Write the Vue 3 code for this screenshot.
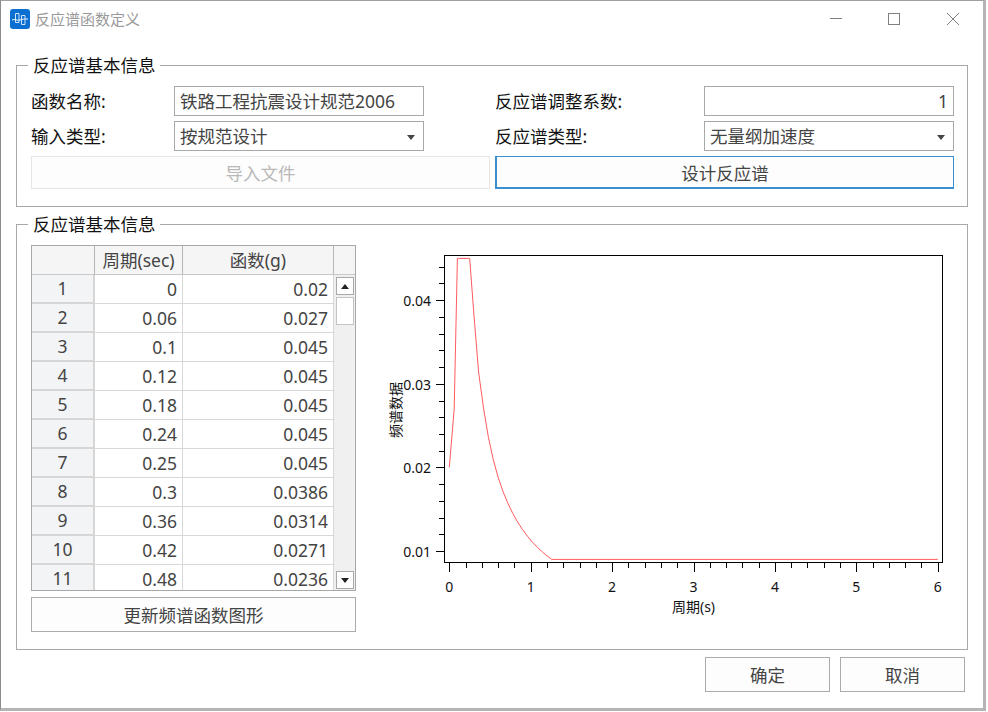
<template>
  <div class="desktop">
    <div class="window">
      <div class="titlebar">
        <svg class="app-icon" width="20" height="20" viewBox="0 0 20 20">
          <rect width="20" height="20" rx="3" fill="#0a6fd0" />
          <path d="M5.5 4.5h3.5v9h-3.5zM11.5 6.5h3.5v9h-3.5z" fill="none" stroke="#cfe3f7" />
          <path d="M2 11c3-1.5 5 1 8 0s4-1 8-1" fill="none" stroke="#eef5fc" />
        </svg>
        <span class="title">反应谱函数定义</span>
        <div class="win-buttons">
          <svg width="12" height="12" viewBox="0 0 12 12"><path d="M0 5.5h12" stroke="#808080" /></svg>
          <svg width="12" height="12" viewBox="0 0 12 12"><rect x=".5" y=".5" width="11" height="11" fill="none" stroke="#808080" /></svg>
          <svg class="close-icon" width="12" height="12" viewBox="0 0 12 12"><path d="M0 0l12 12M12 0L0 12" stroke="#808080" /></svg>
        </div>
      </div>

      <section class="group top-group">
        <span class="legend">反应谱基本信息</span>
        <div class="form-grid">
          <label>函数名称:</label>
          <div class="field">铁路工程抗震设计规范2006</div>
          <label class="right-label">反应谱调整系数:</label>
          <div class="field num">1</div>
          <label>输入类型:</label>
          <div class="field select">按规范设计<i class="caret"></i></div>
          <label class="right-label">反应谱类型:</label>
          <div class="field select">无量纲加速度<i class="caret"></i></div>
        </div>
        <div class="action-row">
          <button class="btn disabled">导入文件</button>
          <button class="btn focused">设计反应谱</button>
        </div>
      </section>

      <section class="group bottom-group">
        <span class="legend">反应谱基本信息</span>
        <div class="left-col">
          <div class="table-wrap">
            <div class="grid">
              <div class="head corner"></div>
              <div class="head">周期(sec)</div>
              <div class="head">函数(g)</div>
              <template v-for="(row, i) in rows" :key="i">
                <div class="row-head">{{ i + 1 }}</div>
                <div class="cell">{{ row[0] }}</div>
                <div class="cell">{{ row[1] }}</div>
              </template>
            </div>
            <div class="scroll-col">
              <div class="head corner"></div>
              <div class="track">
                <span class="sb-btn"><i class="tri up"></i></span>
                <span class="thumb"></span>
                <span class="sb-btn end"><i class="tri down"></i></span>
              </div>
            </div>
          </div>
          <button class="btn update">更新频谱函数图形</button>
        </div>

        <svg class="chart" width="570" height="400" viewBox="0 0 570 400">
          <rect x="58.5" y="21.5" width="498" height="307" fill="#fff" stroke="#000" />
          <path :d="minorTicks" stroke="#000" fill="none" />
          <path :d="majorTicks" stroke="#000" fill="none" />
          <polyline :points="curve" fill="none" stroke="#ff5a5f" />
          <text v-for="t in yLabels" :key="t.label" x="45" :y="t.y + 6" text-anchor="end" class="tick-text">{{ t.label }}</text>
          <text v-for="t in xLabels" :key="t.label" :x="t.x" y="358" text-anchor="middle" class="tick-text">{{ t.label }}</text>
          <text x="307.5" y="378" text-anchor="middle" class="axis-text">周期(s)</text>
          <text x="0" y="0" transform="translate(15 176) rotate(-90)" text-anchor="middle" class="axis-text">频谱数据</text>
        </svg>
      </section>

      <div class="footer">
        <button class="btn footer-btn">确定</button>
        <button class="btn footer-btn">取消</button>
      </div>
    </div>
  </div>
</template>

<script setup>
import { computed } from "vue";

const rows = [
  ["0", "0.02"],
  ["0.06", "0.027"],
  ["0.1", "0.045"],
  ["0.12", "0.045"],
  ["0.18", "0.045"],
  ["0.24", "0.045"],
  ["0.25", "0.045"],
  ["0.3", "0.0386"],
  ["0.36", "0.0314"],
  ["0.42", "0.0271"],
  ["0.48", "0.0236"],
];

// chart coordinates are relative to the svg, whose origin sits at 386,234
const sx = (t) => 63.3 + t * 81.4;
const sy = (v) => 317 - (v - 0.01) * 8360;

const curve = computed(() => {
  const pts = rows.map((r) => [Number(r[0]), Number(r[1])]);
  for (let t = 0.54; t < 1.25; t += 0.06) pts.push([t, 0.0113 / t]);
  pts.push([1.26, 0.009], [6, 0.009]);
  return pts.map(([t, v]) => `${sx(t).toFixed(1)},${sy(v).toFixed(1)}`).join(" ");
});

const majorTicks = computed(() => {
  let d = "";
  for (let i = 0; i <= 6; i++) {
    const x = Math.round(sx(i)) + 0.5;
    d += `M${x} 329v9`;
  }
  for (let i = 1; i <= 4; i++) {
    const y = Math.round(sy(i / 100)) + 0.5;
    d += `M58 ${y}h-8`;
  }
  return d;
});

const minorTicks = computed(() => {
  let d = "";
  for (let i = 0; i < 30; i++) {
    if (i % 5 === 0) continue;
    const x = Math.round(sx(i / 5)) + 0.5;
    d += `M${x} 329v5`;
  }
  for (let i = 10; i <= 44; i += 2) {
    if (i % 10 === 0) continue;
    const y = Math.round(sy(i / 1000)) + 0.5;
    d += `M58 ${y}h-5`;
  }
  return d;
});

const yLabels = [0.01, 0.02, 0.03, 0.04].map((v) => ({
  label: v.toFixed(2),
  y: sy(v),
}));
const xLabels = [0, 1, 2, 3, 4, 5, 6].map((v) => ({ label: v, x: sx(v) }));
</script>

<style>
html,
body {
  margin: 0;
  background: #fff;
}
</style>

<style scoped>
.desktop {
  width: 988px;
  height: 712px;
  background: #fff;
  overflow: hidden;
  font-family: "Noto Sans", "Noto Sans CJK SC", sans-serif;
  font-size: 17.5px;
  color: #222;
}

.window {
  width: 986px;
  height: 711px;
  box-sizing: border-box;
  background: #fff;
  border-top: 1px solid #a0a0a0;
  border-left: 1px solid #8c8c8c;
  border-right: 3px solid #b5b5b5;
  border-bottom: 3px solid #b5b5b5;
  padding: 0 15px;
}

.titlebar {
  height: 64px;
  margin: 0 -15px;
  padding: 8px 24px 0 9px;
  box-sizing: border-box;
  display: flex;
  align-items: flex-start;
}

.app-icon {
  flex: none;
}

.title {
  margin-left: 5px;
  font-size: 15px;
  line-height: 21px;
  color: #9a9a9a;
}

.win-buttons {
  margin-left: auto;
  margin-top: 4px;
  display: flex;
  gap: 46px;
}

.close-icon {
  margin-left: 1px;
}

.group {
  position: relative;
  border: 1px solid #a8a8a8;
  box-sizing: border-box;
  width: 952px;
}

.legend {
  position: absolute;
  left: 11px;
  top: -12px;
  padding: 0 4px 0 5px;
  background: #fff;
  line-height: 22px;
  color: #111;
}

.top-group {
  height: 142px;
  padding: 20px 14px 0;
}

.form-grid {
  display: grid;
  grid-template-columns: 143px 250px 280px 250px;
  grid-auto-rows: 30px;
  row-gap: 5px;
  align-items: center;
}

.form-grid label {
  line-height: 30px;
  color: #111;
}

.right-label {
  padding-left: 71px;
  white-space: nowrap;
}

.field {
  position: relative;
  height: 30px;
  box-sizing: border-box;
  border: 1px solid #a8a8a8;
  padding: 0 5px;
  line-height: 28px;
  color: #444;
  white-space: nowrap;
}

.num {
  text-align: right;
}

.caret {
  position: absolute;
  right: 8px;
  top: 13px;
  border-left: 4px solid transparent;
  border-right: 4px solid transparent;
  border-top: 5px solid #444;
}

.action-row {
  display: grid;
  grid-template-columns: 459px 459px;
  column-gap: 5px;
  margin-top: 5px;
}

.btn {
  display: block;
  height: 33px;
  box-sizing: border-box;
  border: 1px solid #ababab;
  background: #fdfdfd;
  font: inherit;
  color: #444;
  padding: 0;
}

.disabled {
  border: 1px solid #e6e6e6;
  color: #b9b9b9;
}

.focused {
  border-style: solid;
  border-width: 1px 1px 2px 2px;
  border-color: #3a8fd0;
}

.bottom-group {
  margin-top: 17px;
  height: 426px;
  padding: 20px 14px 0;
  display: flex;
  align-items: flex-start;
}

.left-col {
  width: 325px;
  flex: none;
}

.table-wrap {
  display: flex;
  height: 346px;
  box-sizing: border-box;
  border: 1px solid #a8a8a8;
  overflow: hidden;
}

.grid {
  width: 302px;
  display: grid;
  grid-template-columns: 63px 88px 151px;
  grid-auto-rows: 29px;
  align-content: start;
}

.head {
  height: 29px;
  box-sizing: border-box;
  background: #f5f5f5;
  border-right: 1px solid #b5b5b5;
  border-bottom: 1px solid #c8c8c8;
  text-align: center;
  line-height: 28px;
  color: #444;
}

.row-head {
  box-sizing: border-box;
  background: #f3f4f6;
  border-right: 2px solid #d6d6d6;
  border-bottom: 2px solid #d6d6d6;
  text-align: center;
  line-height: 26px;
  color: #444;
}

.cell {
  box-sizing: border-box;
  border-right: 1px solid #d8d8d8;
  border-bottom: 1px solid #d8d8d8;
  padding: 0 5px;
  text-align: right;
  line-height: 28px;
  color: #444;
}

.scroll-col {
  width: 21px;
  flex: none;
}

.scroll-col .head {
  border-right: 0;
}

.track {
  height: 315px;
  background: #f0f0f0;
  padding: 2px 2px 0;
  box-sizing: border-box;
  display: flex;
  flex-direction: column;
  gap: 2px;
}

.sb-btn,
.thumb {
  display: flex;
  align-items: center;
  justify-content: center;
  box-sizing: border-box;
  border: 1px solid #a8a8a8;
  background: #fff;
  width: 18px;
  flex: none;
}

.sb-btn {
  height: 18px;
}

.sb-btn.end {
  margin-top: auto;
  margin-bottom: 1px;
}

.thumb {
  height: 28px;
  border-color: #c4c4c4;
}

.tri {
  border-left: 4px solid transparent;
  border-right: 4px solid transparent;
}

.tri.up {
  border-bottom: 5px solid #222;
}

.tri.down {
  border-top: 5px solid #222;
}

.update {
  width: 325px;
  height: 35px;
  margin-top: 6px;
}

.chart {
  flex: none;
  margin-top: -11px;
  margin-left: 30px;
}

.tick-text {
  font-size: 14px;
  fill: #111;
}

.axis-text {
  font-size: 14px;
  fill: #111;
}

.footer {
  display: flex;
  justify-content: flex-end;
  gap: 10px;
  margin-top: 7px;
  padding-right: 3px;
}

.footer-btn {
  width: 125px;
  height: 35px;
}
</style>
